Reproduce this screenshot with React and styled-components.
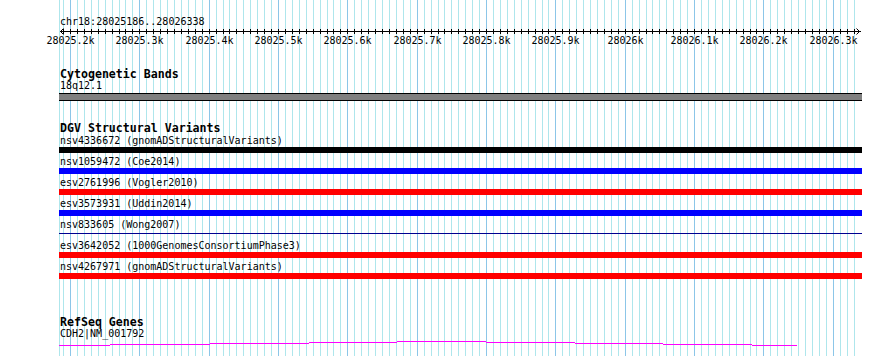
import React from "react";
import styled, { createGlobalStyle } from "styled-components";

const START = 28025186;
const END = 28026338;

// genome position -> pixel column in the 890px image
const xOf = (bp) => Math.round(60.3 + (bp - START) * 0.6934);

const gridStops = [];
for (let bp = 28025190; bp <= 28026330; bp += 10) gridStops.push(bp);

const variants = [
  { name: "nsv4336672 (gnomADStructuralVariants)", color: "#000000" },
  { name: "nsv1059472 (Coe2014)", color: "#0000ff" },
  { name: "esv2761996 (Vogler2010)", color: "#ff0000" },
  { name: "esv3573931 (Uddin2014)", color: "#0000ff" },
  { name: "nsv833605 (Wong2007)", color: "#000090", thin: true },
  { name: "esv3642052 (1000GenomesConsortiumPhase3)", color: "#ff0000" },
  { name: "nsv4267971 (gnomADStructuralVariants)", color: "#ff0000" },
];

// intron connector, rasterised as 1px steps: [x0, x1, row]
const geneSteps = [
  [59, 110, 5],
  [110, 210, 4],
  [210, 309, 3],
  [309, 397, 2],
  [397, 486, 1],
  [486, 575, 2],
  [575, 663, 3],
  [663, 752, 4],
  [752, 797, 5],
];

const GlobalStyle = createGlobalStyle`
  body {
    margin: 0;
    background: #ffffff;
  }
`;

const Page = styled.div`
  display: grid;
  width: 890px;
  height: 356px;
  overflow: hidden;
  background: #ffffff;
  color: #000000;
  font-family: "DejaVu Sans Mono", "Liberation Mono", monospace;
`;

const GridLayer = styled.svg`
  grid-area: 1 / 1;
  display: block;
`;

const Content = styled.div`
  grid-area: 1 / 1;
  z-index: 1;
  display: flex;
  flex-direction: column;
`;

const ChrLabel = styled.div`
  margin: 16px 0 0 60px;
  height: 12px;
  font-size: 10px;
  line-height: 12px;
  white-space: nowrap;
`;

const RulerSvg = styled.svg`
  display: block;
  text {
    font-family: "DejaVu Sans Mono", "Liberation Mono", monospace;
    font-size: 10px;
    fill: #000000;
  }
`;

const Track = styled.section`
  display: flex;
  flex-direction: column;
  margin-top: ${(p) => p.$top}px;
`;

const TrackTitle = styled.div`
  margin-left: 60px;
  height: 12px;
  font-size: 11.6px;
  font-weight: bold;
  line-height: 12px;
  white-space: nowrap;
`;

const FeatureLabel = styled.div`
  margin-left: 60px;
  height: 12px;
  font-size: 10px;
  line-height: 12px;
  white-space: nowrap;
`;

const Band = styled.div`
  margin: 1px 0 0 59px;
  width: 803px;
  height: 8px;
  box-sizing: border-box;
  border-top: 1px solid #000000;
  border-bottom: 1px solid #000000;
  background: #808080;
`;

const VariantList = styled.div`
  display: flex;
  flex-direction: column;
  gap: 3px;
  margin-top: 1px;
`;

const Variant = styled.div`
  display: flex;
  flex-direction: column;
`;

const Bar = styled.div`
  margin: ${(p) => (p.$thin ? "2px 0 3px 59px" : "0 0 0 59px")};
  width: 803px;
  height: ${(p) => (p.$thin ? 1 : 6)}px;
  background: ${(p) => p.$color};
`;

const GeneSvg = styled.svg`
  display: block;
`;

const Grid = () => (
  <GridLayer width="890" height="356">
    <rect x="59" y="0" width="1" height="356" fill="#aee6ec" />
    {gridStops.map((bp) => (
      <rect
        key={bp}
        x={xOf(bp)}
        y="0"
        width="1"
        height="356"
        fill={bp % 100 === 0 ? "#8cc6e8" : "#aee6ec"}
      />
    ))}
  </GridLayer>
);

const Ruler = () => (
  <RulerSvg width="890" height="22">
    <rect x="60" y="3" width="801" height="1" fill="#000" />
    <path d="M63.5 0.5 L60.5 3.5 L63.5 6.5" fill="none" stroke="#000" />
    <path d="M856.5 0.5 L859.5 3.5 L856.5 6.5" fill="none" stroke="#000" />
    {gridStops.map((bp) => (
      <rect key={bp} x={xOf(bp)} y="1" width="1" height="5" fill="#000" />
    ))}
    {gridStops
      .filter((bp) => bp % 100 === 0)
      .map((bp) => (
        <text key={bp} x={xOf(bp) + 0.5} y="16" textAnchor="middle">
          {bp / 1000}k
        </text>
      ))}
  </RulerSvg>
);

const GeneModel = () => (
  <GeneSvg width="890" height="6">
    {geneSteps.map(([x0, x1, row]) => (
      <rect key={x0} x={x0} y={row} width={x1 - x0} height="1" fill="#ff00ff" />
    ))}
  </GeneSvg>
);

export default function App() {
  return (
    <>
      <GlobalStyle />
      <Page>
        <Grid />
        <Content>
          <ChrLabel>chr18:{START}..{END}</ChrLabel>
          <Ruler />

          <Track $top={18}>
            <TrackTitle>Cytogenetic Bands</TrackTitle>
            <FeatureLabel>18q12.1</FeatureLabel>
            <Band />
          </Track>

          <Track $top={21}>
            <TrackTitle>DGV Structural Variants</TrackTitle>
            <VariantList>
              {variants.map((v) => (
                <Variant key={v.name}>
                  <FeatureLabel>{v.name}</FeatureLabel>
                  <Bar $color={v.color} $thin={v.thin} />
                </Variant>
              ))}
            </VariantList>
          </Track>

          <Track $top={37}>
            <TrackTitle>RefSeq Genes</TrackTitle>
            <FeatureLabel>CDH2|NM_001792</FeatureLabel>
            <GeneModel />
          </Track>
        </Content>
      </Page>
    </>
  );
}
